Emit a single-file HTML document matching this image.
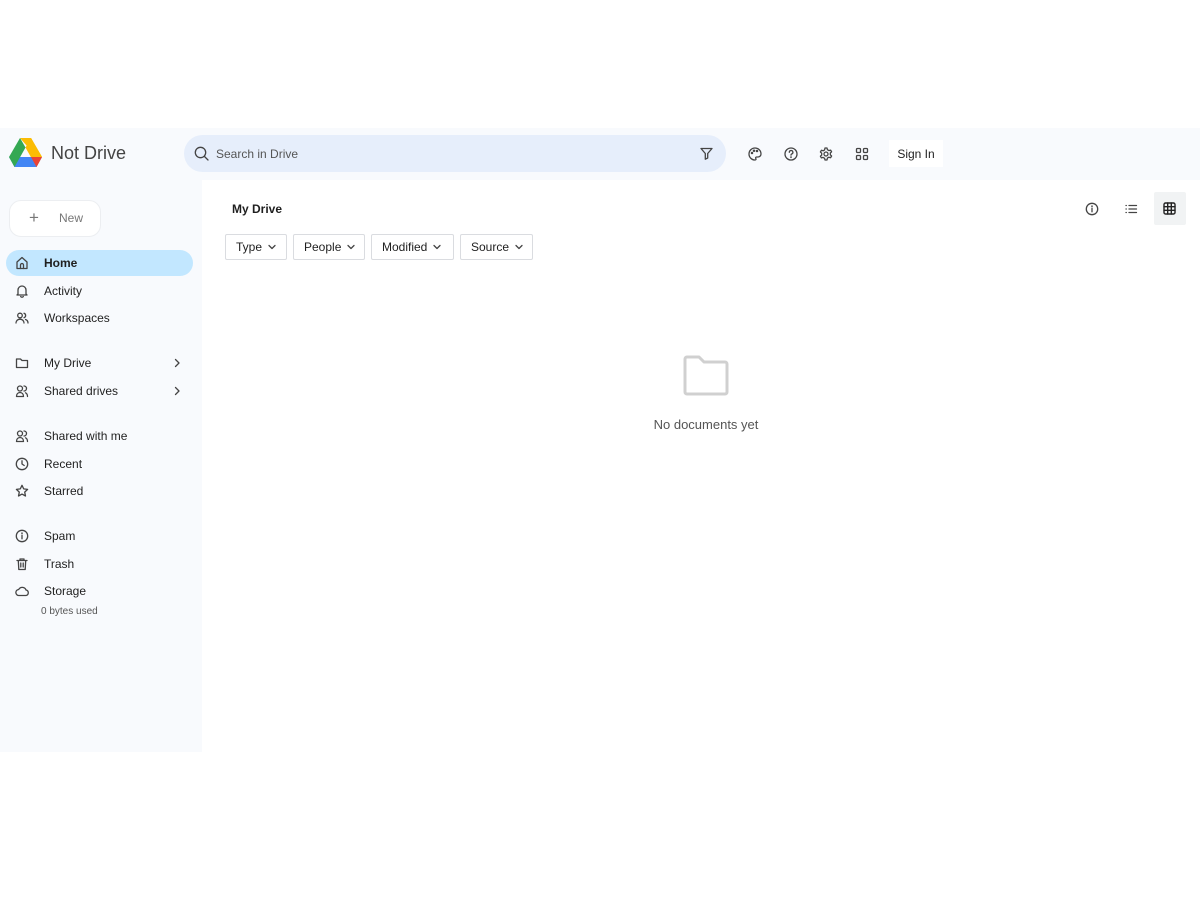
<!DOCTYPE html>
<html><head><meta charset="utf-8"><style>
*{margin:0;padding:0;box-sizing:border-box}
body{width:1200px;height:900px;background:#fff;font-family:"Liberation Sans",sans-serif;position:relative;overflow:hidden;color:#1f1f1f}
.app{position:absolute;left:0;top:128px;width:1200px;height:624px;background:#f8fafd}
.main{position:absolute;left:202px;top:180px;width:998px;height:572px;background:#fff}
.a{position:absolute}
.nav{position:absolute;left:0;width:193px;height:26px;font-size:12px;color:#1f1f1f;display:flex;align-items:center}
.nav svg{position:absolute;left:15px;top:6px}
.nav span{position:absolute;left:44px}
.chev{position:absolute;left:172px!important;top:8px!important}
svg{fill:none;stroke:#444;stroke-width:1.3;stroke-linecap:round;stroke-linejoin:round}
.chip{position:absolute;top:234px;height:26px;border:1px solid #dadce0;border-radius:2px;font-size:12px;display:flex;align-items:center;padding-left:10px;background:#fff;color:#1f1f1f}
.chip svg{margin-left:5px}
</style></head><body>
<div class="app"></div>
<div class="main"></div>
<svg class="a" style="left:9px;top:138px;stroke:none" width="33" height="30" viewBox="0 0 33 30">
<polygon points="11,0 22,0 33,19 27.5,19" fill="#fbbc04"/>
<polygon points="22,0 33,19 27.5,29 16.5,9.5" fill="#fbbc04"/>
<polygon points="0,19 5.5,29 27.5,29 33,19" fill="#4285f4"/>
<polygon points="11,0 16.5,9.5 5.5,29 0,19" fill="#34a853"/>
<polygon points="27.5,19 33,19 27.5,29 22,19" fill="#ea4335"/>
<polygon points="22,0 33,19 27.5,19 16.5,0" fill="#fbbc04"/>
</svg>
<div class="a" style="left:51px;top:143px;font-size:18px;color:#444">Not Drive</div>
<div class="a" style="left:184px;top:135px;width:542px;height:37px;border-radius:19px;background:#e6eefb"></div>
<svg class="a" style="left:194px;top:146px" width="15" height="15" viewBox="0 0 15 15"><circle cx="6.5" cy="6.5" r="5.2"/><path d="M10.5 10.5l3.5 3.5"/></svg>
<div class="a" style="left:216px;top:147px;font-size:12px;color:#555">Search in Drive</div>
<svg class="a" style="left:700px;top:147px" width="13" height="13" viewBox="0 0 13 13"><path d="M1 1.5h11l-4.3 5v4.5l-2.4 1.2v-5.7z"/></svg>
<svg class="a" style="left:748px;top:147px" width="14" height="14" viewBox="0 0 14 14"><path d="M7 1a6 6 0 0 0 0 12c1 0 1.3-.8.8-1.5-.5-.7 0-1.5.8-1.5H10a3 3 0 0 0 3-3C13 3.5 10.3 1 7 1z"/><circle cx="4" cy="6" r=".6"/><circle cx="6" cy="3.8" r=".6"/><circle cx="9" cy="4" r=".6"/></svg>
<svg class="a" style="left:784px;top:147px" width="14" height="14" viewBox="0 0 14 14"><circle cx="7" cy="7" r="6"/><path d="M5.3 5.3a1.8 1.8 0 1 1 2.4 1.7c-.5.2-.7.6-.7 1.1"/><circle cx="7" cy="10.2" r=".3"/></svg>
<svg class="a" style="left:819px;top:147px" width="14" height="14" viewBox="0 0 14 14"><circle cx="7" cy="7" r="2"/><path d="M6 1h2l.4 1.7 1.5.9 1.7-.5 1 1.7-1.3 1.2v1.8l1.3 1.2-1 1.7-1.7-.5-1.5.9L8 13H6l-.4-1.7-1.5-.9-1.7.5-1-1.7L2.7 8V6.2L1.4 5l1-1.7 1.7.5 1.5-.9z"/></svg>
<svg class="a" style="left:855px;top:147px" width="14" height="14" viewBox="0 0 14 14"><rect x="1.5" y="1.5" width="4" height="4" rx="1"/><rect x="8.5" y="1.5" width="4" height="4" rx="1"/><rect x="1.5" y="8.5" width="4" height="4" rx="1"/><rect x="8.5" y="8.5" width="4" height="4" rx="1"/></svg>
<div class="a" style="left:889px;top:140px;width:54px;height:27px;background:#fff;font-size:12px;display:flex;align-items:center;justify-content:center;color:#1f1f1f">Sign In</div>
<div class="a" style="left:9px;top:200px;width:92px;height:37px;border-radius:12px;background:#fff;border:1px solid #eceef1"></div>
<div class="a" style="left:29px;top:208px;font-size:17px;color:#777;font-weight:300">+</div>
<div class="a" style="left:59px;top:211px;font-size:12px;color:#777">New</div>
<div class="a" style="left:6px;top:250px;width:187px;height:26px;border-radius:13px;background:#c2e7ff"></div>
<div class="nav" style="top:250px;font-weight:bold"><svg width="14" height="14" viewBox="0 0 14 14"><path d="M2 6l5-4.5L12 6v6.5H2z"/><path d="M5.5 12.5V9a1.5 1.5 0 0 1 3 0v3.5"/></svg><span>Home</span></div>
<div class="nav" style="top:278px"><svg width="14" height="14" viewBox="0 0 14 14"><path d="M3 10V6a4 4 0 0 1 8 0v4l1 1H2z"/><path d="M5.7 12.5a1.5 1.5 0 0 0 2.6 0"/></svg><span>Activity</span></div>
<div class="nav" style="top:305px"><svg width="14" height="14" viewBox="0 0 14 14"><circle cx="5" cy="4.5" r="2.3"/><path d="M1 12c0-2.3 1.8-3.8 4-3.8s4 1.5 4 3.8"/><path d="M9 2.3a2.3 2.3 0 0 1 0 4.4M10.5 8.5c1.5.5 2.5 1.7 2.5 3.5"/></svg><span>Workspaces</span></div>
<div class="nav" style="top:350px"><svg width="14" height="14" viewBox="0 0 14 14"><path d="M1.5 3h4l1.5 1.5h5.5v7h-11z"/></svg><span>My Drive</span><svg class="chev" width="10" height="10" viewBox="0 0 10 10"><path d="M3.5 1.5l3.5 3.5-3.5 3.5"/></svg></div>
<div class="nav" style="top:378px"><svg width="14" height="14" viewBox="0 0 14 14"><circle cx="5" cy="4.5" r="2.5"/><path d="M1.5 12.5c0-2.5 1.5-4 3.5-4s3.5 1.5 3.5 4z"/><path d="M9 2a2.5 2.5 0 0 1 0 5M10.5 8.8c1.3.6 2 1.8 2 3.7"/></svg><span>Shared drives</span><svg class="chev" width="10" height="10" viewBox="0 0 10 10"><path d="M3.5 1.5l3.5 3.5-3.5 3.5"/></svg></div>
<div class="nav" style="top:423px"><svg width="14" height="14" viewBox="0 0 14 14"><circle cx="5" cy="4.5" r="2.5"/><path d="M1.5 12.5c0-2.5 1.5-4 3.5-4s3.5 1.5 3.5 4z"/><path d="M9 2a2.5 2.5 0 0 1 0 5M10.5 8.8c1.3.6 2 1.8 2 3.7"/></svg><span>Shared with me</span></div>
<div class="nav" style="top:451px"><svg width="14" height="14" viewBox="0 0 14 14"><circle cx="7" cy="7" r="5.7"/><path d="M7 3.8V7l2.2 1.5"/></svg><span>Recent</span></div>
<div class="nav" style="top:478px"><svg width="14" height="14" viewBox="0 0 14 14"><path d="M7 1.3l1.7 3.6 3.9.5-2.9 2.7.8 3.9L7 10.1l-3.5 1.9.8-3.9-2.9-2.7 3.9-.5z"/></svg><span>Starred</span></div>
<div class="nav" style="top:523px"><svg width="14" height="14" viewBox="0 0 14 14"><circle cx="7" cy="7" r="5.7"/><path d="M7 6.3v3.5"/><circle cx="7" cy="4.3" r=".3"/></svg><span>Spam</span></div>
<div class="nav" style="top:551px"><svg width="14" height="14" viewBox="0 0 14 14"><path d="M2 3.5h10M5 3.5V2h4v1.5M3.3 3.5l.5 9h6.4l.5-9M5.8 6v4M8.2 6v4"/></svg><span>Trash</span></div>
<div class="nav" style="top:578px"><svg width="14" height="14" viewBox="0 0 14 14"><path d="M4 11.5a3 3 0 0 1-.3-6A4 4 0 0 1 11 6a2.8 2.8 0 0 1 0 5.5z"/></svg><span>Storage</span></div>
<div class="a" style="left:41px;top:606px;font-size:10px;color:#555">0 bytes used</div>
<div class="a" style="left:232px;top:202px;font-size:12px;font-weight:bold;color:#1f1f1f">My Drive</div>
<svg class="a" style="left:1085px;top:202px" width="14" height="14" viewBox="0 0 14 14"><circle cx="7" cy="7" r="5.7"/><path d="M7 6.3v3.5"/><circle cx="7" cy="4.3" r=".3"/></svg>
<svg class="a" style="left:1124px;top:202px" width="14" height="14" viewBox="0 0 14 14"><path d="M5 3.5h7.5M5 7h7.5M5 10.5h7.5M2 3.5h.3M2 7h.3M2 10.5h.3"/></svg>
<div class="a" style="left:1154px;top:192px;width:32px;height:33px;background:#f1f3f4;border-radius:2px"></div>
<svg class="a" style="left:1163px;top:202px;stroke:#222;stroke-width:1.4" width="13" height="13" viewBox="0 0 13 13"><rect x="1" y="1" width="11" height="11" rx="1.5"/><path d="M4.7 1v11M8.3 1v11M1 4.7h11M1 8.3h11"/></svg>
<div class="chip" style="left:225px;width:62px">Type<svg width="10" height="10" viewBox="0 0 10 10"><path d="M2 3.5l3 3 3-3"/></svg></div>
<div class="chip" style="left:293px;width:72px">People<svg width="10" height="10" viewBox="0 0 10 10"><path d="M2 3.5l3 3 3-3"/></svg></div>
<div class="chip" style="left:371px;width:83px">Modified<svg width="10" height="10" viewBox="0 0 10 10"><path d="M2 3.5l3 3 3-3"/></svg></div>
<div class="chip" style="left:460px;width:73px">Source<svg width="10" height="10" viewBox="0 0 10 10"><path d="M2 3.5l3 3 3-3"/></svg></div>
<svg class="a" style="left:681px;top:354px;stroke:#d0d0d0;stroke-width:3" width="50" height="44" viewBox="0 0 50 44"><path d="M4 5a2 2 0 0 1 2-2h12l5 5h21a2 2 0 0 1 2 2v28a2 2 0 0 1-2 2H6a2 2 0 0 1-2-2z"/></svg>
<div class="a" style="left:606px;top:417px;width:200px;text-align:center;font-size:13px;color:#555">No documents yet</div>
</body></html>
